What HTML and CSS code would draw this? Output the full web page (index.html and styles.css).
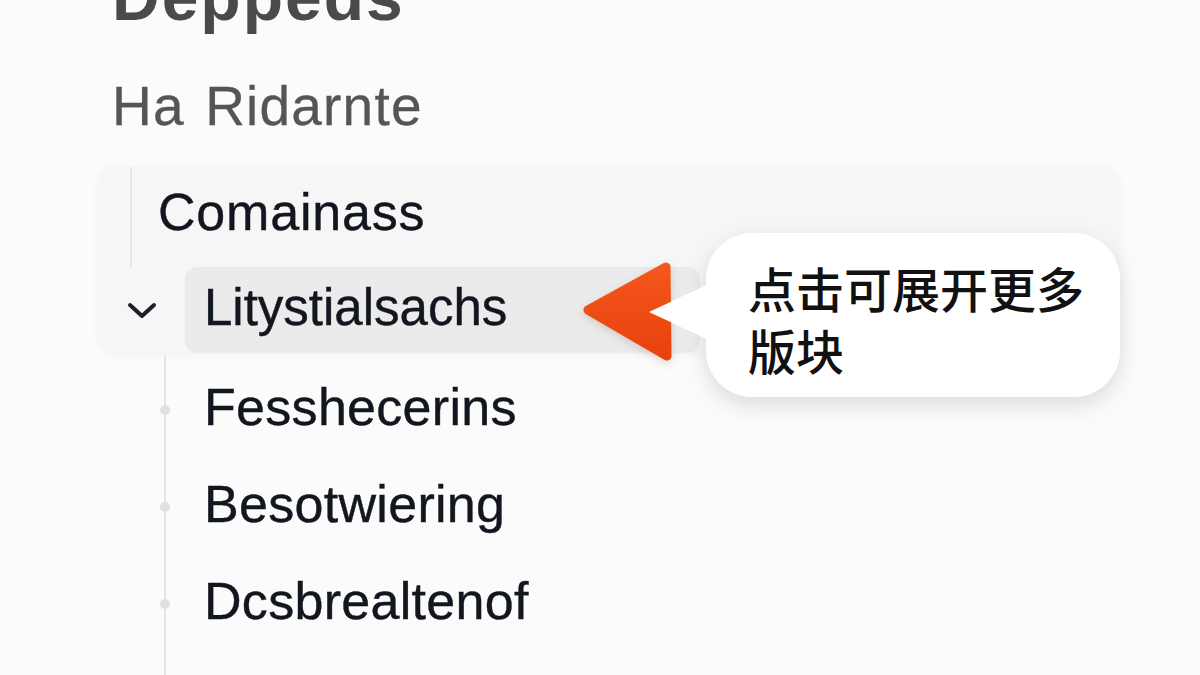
FILE: index.html
```html
<!DOCTYPE html>
<html lang="zh-CN">
<head>
<meta charset="utf-8">
<title>Deppeds</title>
<link rel="stylesheet" href="styles.css">
</head>
<body>
<div class="page">
  <h1 class="title">Deppeds</h1>
  <p class="subtitle">Ha Ridarnte</p>

  <div class="panel">
    <div class="row-top">Comainass</div>
    <div class="row-sel">
      <svg class="chevron" width="30" height="18" viewBox="0 0 30 18"><path d="M3 4 L15 15 L27 4" fill="none" stroke="#1b202b" stroke-width="4" stroke-linecap="round" stroke-linejoin="round"/></svg>
      <div class="highlight">Litystialsachs</div>
    </div>
  </div>

  <ul class="tree">
    <li>Fesshecerins</li>
    <li>Besotwiering</li>
    <li>Dcsbrealtenof</li>
  </ul>

  <svg class="arrow" width="100" height="110" viewBox="0 0 100 110">
    <defs>
      <linearGradient id="og" x1="0" y1="0" x2="0" y2="1">
        <stop offset="0" stop-color="#f4561c"/>
        <stop offset="1" stop-color="#e8420e"/>
      </linearGradient>
    </defs>
    <polygon points="10,50 88,7 89,96" fill="url(#og)" stroke="url(#og)" stroke-width="9" stroke-linejoin="round"/>
  </svg>

  <div class="bubble">点击可展开更多<br>版块</div>
</div>
</body>
</html>
```
FILE: styles.css
```css
html, body {
  margin: 0;
  padding: 0;
}
body {
  background: #fbfbfb;
  font-family: "Liberation Sans", Arial, sans-serif;
  color: #12161e;
  width: 1200px;
  height: 675px;
  overflow: hidden;
}
.page {
  position: relative;
  display: flow-root;
  height: 675px;
}
.title {
  margin: -34px 0 0 112px;
  font-size: 66px;
  line-height: 62px;
  font-weight: 700;
  letter-spacing: 2px;
  color: #4a4a4a;
}
.subtitle {
  margin: 48px 0 0 112px;
  font-size: 55px;
  line-height: 60px;
  color: #555555;
  letter-spacing: 1.2px;
  word-spacing: 4px;
  -webkit-text-stroke: 0.3px #555555;
}
.panel {
  margin: 31px 0 0 97px;
  width: 1023px;
  padding-bottom: 2px;
  background: #f6f6f6;
  border-radius: 18px;
  box-shadow: 0 0 8px rgba(0, 0, 0, 0.03);
}
.row-top,
.highlight,
.tree li {
  -webkit-text-stroke: 0.4px #12161e;
}
.row-top {
  margin-left: 33px;
  height: 100px;
  box-sizing: border-box;
  border-left: 2px solid #e7e7e7;
  padding-left: 26px;
  font-size: 52px;
  letter-spacing: 0.8px;
  line-height: 91px;
}
.row-sel {
  display: flex;
  align-items: center;
  height: 86px;
}
.chevron {
  margin-left: 30px;
  flex: none;
}
.highlight {
  margin-left: 28px;
  width: 515px;
  height: 86px;
  box-sizing: border-box;
  padding: 0 0 5px 19px;
  background: #ebebec;
  border-radius: 12px;
  font-size: 51px;
  line-height: 81px;
}
.tree {
  list-style: none;
  margin: 0 0 0 164px;
  padding: 4px 0 40px 0;
  border-left: 2px solid #e4e4e4;
}
.tree li {
  position: relative;
  height: 97px;
  padding-left: 38px;
  font-size: 52px;
  letter-spacing: 0.3px;
  line-height: 97px;
}
.tree li::before {
  content: "";
  position: absolute;
  left: -6px;
  top: 46px;
  width: 10px;
  height: 10px;
  border-radius: 50%;
  background: #e0e0e0;
}
.arrow {
  position: absolute;
  left: 578px;
  top: 260px;
  filter: drop-shadow(0 3px 4px rgba(120, 40, 0, 0.18));
}
.bubble {
  position: absolute;
  left: 706px;
  top: 233px;
  width: 414px;
  height: 164px;
  box-sizing: border-box;
  padding: 23px 0 0 42px;
  background: #ffffff;
  border-radius: 46px;
  box-shadow: 0 8px 22px rgba(0, 0, 0, 0.13);
  font-family: "Noto Sans CJK SC", "Noto Sans", sans-serif;
  font-weight: 500;
  font-size: 48px;
  line-height: 62px;
  color: #111111;
}
.bubble::before {
  content: "";
  position: absolute;
  left: -57px;
  top: 50px;
  width: 62px;
  height: 58px;
  background: #ffffff;
  clip-path: polygon(0 50%, 100% 0, 100% 100%);
}
```
